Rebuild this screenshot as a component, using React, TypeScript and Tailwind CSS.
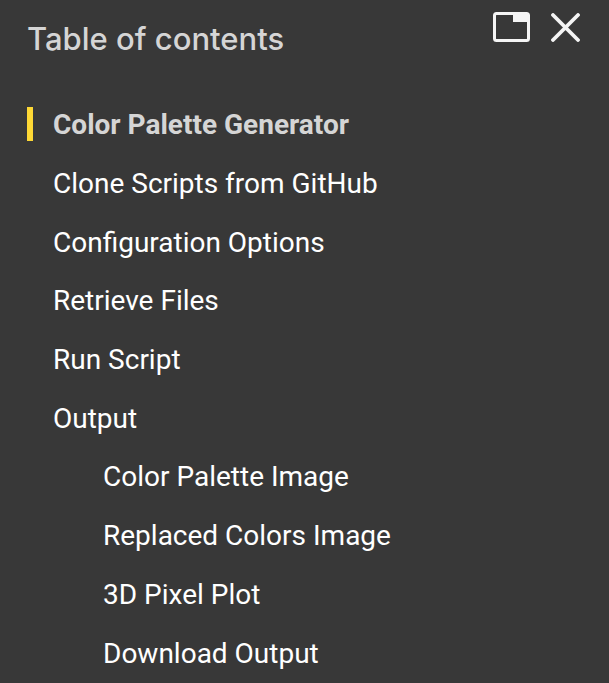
const items = [
  { label: "Clone Scripts from GitHub", sub: false },
  { label: "Configuration Options", sub: false },
  { label: "Retrieve Files", sub: false },
  { label: "Run Script", sub: false },
  { label: "Output", sub: false },
  { label: "Color Palette Image", sub: true },
  { label: "Replaced Colors Image", sub: true },
  { label: "3D Pixel Plot", sub: true },
  { label: "Download Output", sub: true },
];

export default function App() {
  return (
    <div className="h-[683px] w-[609px] overflow-hidden bg-[#383838] font-['Roboto',sans-serif] text-[28px] leading-[58.7px] text-white">
      <div className="flex h-[78px] items-start justify-between pl-[27px] pr-[29px]">
        <div className="mt-[19px] font-['Inter',sans-serif] text-[31px] font-medium leading-[40px] text-[#d5d5d5]">Table of contents</div>
        <div className="mt-[12px] flex items-start gap-[21px]">
          <svg width="37" height="30" viewBox="0 0 37 30" fill="none">
            <rect x="1.5" y="1.5" width="34" height="27" rx="2" stroke="#f5f5f5" strokeWidth="3" />
            <path d="M20 1.5H35.5V10H20Z" fill="#f5f5f5" />
          </svg>
          <svg className="mt-[1px]" width="29" height="29" viewBox="0 0 29 29" fill="none">
            <path d="M2 2L27 27M27 2L2 27" stroke="#f5f5f5" strokeWidth="3.8" strokeLinecap="round" />
          </svg>
        </div>
      </div>
      <div className="relative pl-[53px] font-bold text-[#d5d5d5]">
        <div className="absolute left-[27px] top-[29px] h-[34px] w-[6px] bg-[#fdd835]" />
        <div className="pt-[18.25px]">Color Palette Generator</div>
      </div>
      {items.map((item) => (
        <div key={item.label} className={item.sub ? "pl-[103px]" : "pl-[53px]"}>
          {item.label}
        </div>
      ))}
    </div>
  );
}
